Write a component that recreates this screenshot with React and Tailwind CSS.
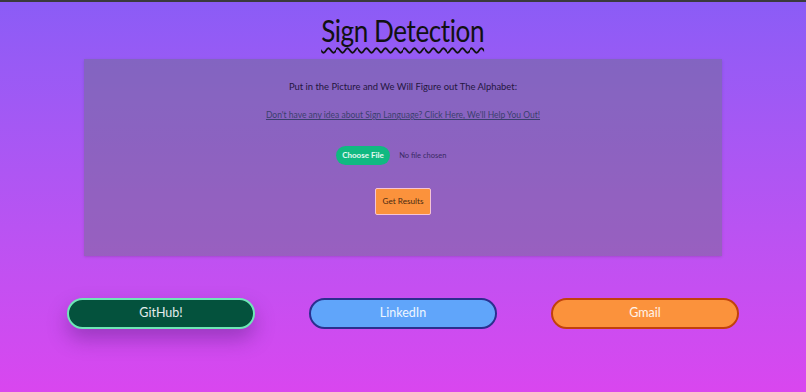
import React from 'react'

const font = { fontFamily: 'Lato, "Open Sans", sans-serif' }

function LinkButton({ children, className }) {
  return (
    <a
      href="#"
      className={`flex h-[31px] w-[188px] items-center justify-center rounded-full border-2 text-[12.5px] text-white/90 ${className}`}
    >
      {children}
    </a>
  )
}

export default function App() {
  return (
    <div
      className="min-h-[392px] border-t-2 border-[#3a3a3c] bg-gradient-to-b from-[#8b5cf6] to-[#d946ef]"
      style={font}
    >
      <div className="flex justify-center pt-[8px]">
        <h1 className="inline-block scale-x-[0.87] text-[30px] leading-[40px] tracking-[-0.5px] text-[#111] underline decoration-wavy decoration-[1.5px] underline-offset-[5px]">
          Sign Detection
        </h1>
      </div>

      <div className="mx-auto mt-[9px] flex h-[197px] w-[638px] flex-col items-center bg-gray-500/45 shadow-sm">
        <p className="mt-[22px] text-[9.4px] leading-[12px] text-[#24163f]">
          Put in the Picture and We Will Figure out The Alphabet:
        </p>
        <a href="#" className="mt-[16px] text-[8.5px] leading-[12px] text-[#3b3f6e] underline">
          Don't have any idea about Sign Language? Click Here, We'll Help You Out!
        </a>
        <div className="mt-[25px] flex items-center gap-[9px] pr-[24px]">
          <span className="rounded-full bg-[#10b981] px-[6.5px] py-[4px] text-[8px] leading-[11px] font-bold text-white/90">
            Choose File
          </span>
          <span className="text-[7.5px] text-[#3a2a66]">No file chosen</span>
        </div>
        <button className="mt-[23px] h-[27px] w-[56px] rounded-[2px] border border-[#f5c4d4] bg-[#fb923c] text-[8.2px] text-[#4a2a12]">
          Get Results
        </button>
      </div>

      <div className="mt-[42px] flex justify-center gap-[54px]">
        <LinkButton className="border-[#6ee7b7] bg-[#04523d] shadow-[0_10px_20px_rgba(60,20,100,0.35)]">
          GitHub!
        </LinkButton>
        <LinkButton className="border-[#2b2f8f] bg-[#60a5fa]">LinkedIn</LinkButton>
        <LinkButton className="border-[#c2410c] bg-[#fb923c]">Gmail</LinkButton>
      </div>
    </div>
  )
}
